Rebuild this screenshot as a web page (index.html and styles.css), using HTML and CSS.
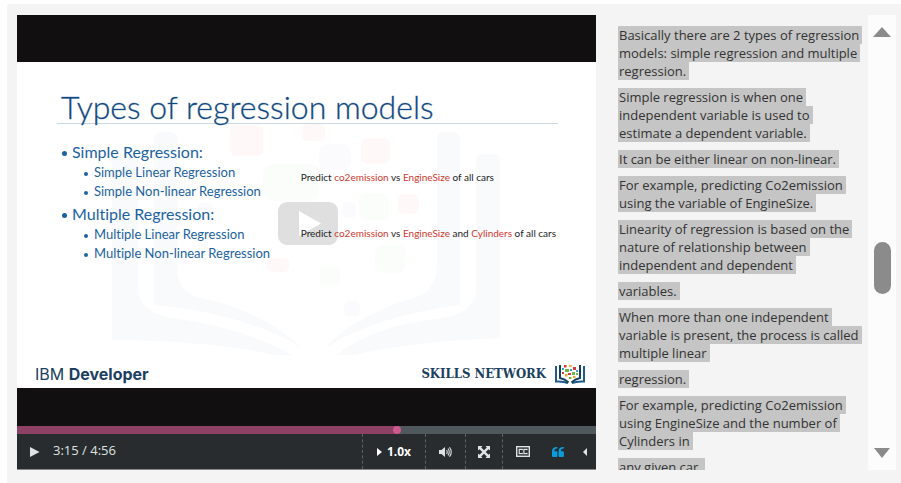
FILE: index.html
```html
<!DOCTYPE html>
<html lang="en">
<head>
<meta charset="utf-8">
<title>Types of regression models</title>
<link rel="stylesheet" href="styles.css">
</head>
<body>
<main class="lesson">
  <section class="player" aria-label="Video player">
    <div class="stage">
      <article class="slide">
        <svg class="watermark" viewBox="0 0 579 326" preserveAspectRatio="none" aria-hidden="true">
          <g fill="#f9fafc">
            <path d="M95 98Q95 92 101 92H114Q121 92 121 99V230Q125 252 160 257Q225 265 275 293H258Q195 279 98 278Q95 278 95 276Z"/>
            <path d="M137 77Q137 70 144 70H153Q160 70 160 77V205Q160 229 180 235Q245 248 285 286Q230 252 137 243Z"/>
            <path d="M483 98Q483 92 477 92H466Q459 92 459 99V230Q457 252 420 257Q355 264 320 293H336Q400 279 483 276Z"/>
            <path d="M443 77Q443 70 436 70H427Q420 70 420 77V205Q418 229 400 235Q340 252 308 286Q358 254 443 243Z"/>
          </g>
          <g fill="#fef8f8">
            <rect x="213" y="63" width="33" height="31" rx="6"/><rect x="285" y="62" width="23" height="17" rx="6"/>
            <rect x="344" y="76" width="29" height="26" rx="7"/><rect x="381" y="132" width="21" height="20" rx="5"/><rect x="250" y="196" width="22" height="14" rx="5"/>
          </g>
          <g fill="#fafdf9">
            <rect x="246" y="102" width="56" height="37" rx="9"/><rect x="342" y="131" width="30" height="27" rx="7"/>
            <rect x="303" y="205" width="20" height="18" rx="4"/><rect x="358" y="183" width="30" height="28" rx="7"/>
          </g>
          <g fill="#fbfbfd">
            <rect x="302" y="82" width="32" height="26" rx="8"/><rect x="180" y="141" width="16" height="16" rx="5"/><rect x="327" y="239" width="16" height="15" rx="5"/><rect x="325" y="140" width="14" height="16" rx="5"/>
          </g>
        </svg>
        <button class="big-play" aria-label="Play video"><svg width="60" height="43" viewBox="0 0 60 43"><path d="M21 9V34L43 21.500Z" fill="#fff"/></svg></button>
        <h1>Types of regression models</h1>
        <div class="columns">
          <ul class="topics">
            <li>Simple Regression:
              <ul><li>Simple Linear Regression</li><li>Simple Non-linear Regression</li></ul>
            </li>
            <li>Multiple Regression:
              <ul><li>Multiple Linear Regression</li><li>Multiple Non-linear Regression</li></ul>
            </li>
          </ul>
          <div class="examples">
            <p>Predict <em>co2emission</em> vs <em>EngineSize</em> of all cars</p>
            <p>Predict <em>co2emission</em> vs <em>EngineSize</em> and <em>Cylinders</em> of all cars</p>
          </div>
        </div>
        <footer class="brands">
          <span class="ibm">IBM <b>Developer</b></span>
          <span class="skills">SKILLS NETWORK
            <svg width="32" height="20" viewBox="0 0 32 20" aria-hidden="true">
              <g fill="none" stroke="#1c5c8c" stroke-width="2"><path d="M2 2V17.500Q9 17 14 19"/><path d="M30 2V17.500Q23 17 18 19"/></g>
              <g fill="none" stroke="#163f60" stroke-width="2"><path d="M6 1V14Q11 15 14.500 18.500"/><path d="M26 1V14Q21 15 17.500 18.500"/></g>
              <g fill="#d83a3a"><rect x="10" y="1" width="2.500" height="2.500"/><rect x="19" y="3" width="3" height="3"/><rect x="14" y="9" width="3" height="2"/><rect x="8" y="8" width="2" height="2"/></g>
              <g fill="#72b640"><rect x="11" y="5" width="4" height="3"/><rect x="18" y="8" width="3" height="3"/><rect x="15" y="13" width="2.500" height="2"/><rect x="22" y="9" width="2" height="2"/></g>
              <g fill="#ecaa2c"><rect x="15" y="1" width="2.500" height="2"/><rect x="11" y="10" width="2.500" height="2.500"/><rect x="19" y="12" width="2.500" height="2"/></g>
              <g fill="#36a5c9"><rect x="16" y="5" width="2" height="2"/><rect x="8" y="4" width="2" height="2"/><rect x="22" y="6" width="2" height="2"/></g>
            </svg>
          </span>
        </footer>
      </article>
    </div>
    <input class="seek" type="range" min="0" max="296" value="195" aria-label="Video position">
    <div class="controls">
      <button class="play" aria-label="Play"><svg width="10" height="10" viewBox="0 0 10 10"><path d="M0 0L9.500 5L0 10Z"/></svg></button>
      <span class="time">3:15 / 4:56</span>
      <button class="speed" aria-label="Speed 1.0x"><svg width="5" height="8" viewBox="0 0 5 8"><path d="M0 0L5 4L0 8Z"/></svg>1.0x</button>
      <button class="volume" aria-label="Volume"><svg width="13" height="12" viewBox="0 0 13 12"><path d="M0 4H2.500L6 1V11L2.500 8H0Z"/><path d="M7.500 4Q9 6 7.500 8M9 2.500Q11.500 6 9 9.500M10.500 1.200Q14 6 10.500 10.800" fill="none" stroke="currentColor" stroke-width="1.100"/></svg></button>
      <button class="full" aria-label="Fill browser"><svg width="12" height="12" viewBox="0 0 12 12"><path d="M0 0H4.500L3.200 1.500L6 4.300L8.800 1.500L7.500 0H12V4.500L10.500 3.200L7.700 6L10.500 8.800L12 7.500V12H7.500L8.800 10.500L6 7.700L3.200 10.500L4.500 12H0V7.500L1.500 8.800L4.300 6L1.500 3.200L0 4.500Z"/></svg></button>
      <button class="cc" aria-label="Closed captions"><svg width="14" height="11" viewBox="0 0 14 11"><g fill="none" stroke="currentColor"><rect x=".700" y=".700" width="12.600" height="9.600" stroke-width="1.400"/><path d="M6.300 4.300V3.300H3.200V7.700H6.300V6.700M11 4.300V3.300H7.900V7.700H11V6.700" stroke-width="1.200"/></g></svg></button>
      <button class="quote" aria-label="Transcript"><svg width="12" height="10" viewBox="0 0 12 10"><path id="q" d="M5.400 0V1.600H4.700Q2.300 1.800 2.300 4.200H4.400Q5.400 4.200 5.400 5.200V8.900Q5.400 10 4.300 10H1.100Q0 10 0 8.900V4.500Q0 0 4.500 0Z"/><use href="#q" x="6.500"/></svg></button>
      <button class="more" aria-label="Show language menu"><svg width="4" height="8" viewBox="0 0 4 8"><path d="M4 0L0 4L4 8Z"/></svg></button>
    </div>
  </section>
  <section class="transcript" aria-label="Transcript">
    <p><span>Basically there are 2 types of regression models: simple regression and multiple regression.</span></p>
    <p><span>Simple regression is when one independent variable is used to estimate a dependent variable.</span></p>
    <p><span>It can be either linear on non-linear.</span></p>
    <p><span>For example, predicting Co2emission using the variable of EngineSize.</span></p>
    <p><span>Linearity of regression is based on the nature of relationship between independent and dependent</span></p>
    <p><span>variables.</span></p>
    <p><span>When more than one independent variable is present, the process is called multiple linear</span></p>
    <p><span>regression.</span></p>
    <p><span>For example, predicting Co2emission using EngineSize and the number of Cylinders in</span></p>
    <p><span>any given car.</span></p>
  </section>
  <div class="scrollbar">
    <button aria-label="Scroll up"><svg width="18" height="10" viewBox="0 0 18 10"><path d="M9 0L18 10H0Z"/></svg></button>
    <div class="track"><div class="thumb"></div></div>
    <button aria-label="Scroll down"><svg width="16" height="10" viewBox="0 0 16 10"><path d="M0 0H16L8 10Z"/></svg></button>
  </div>
</main>
</body>
</html>
```
FILE: styles.css
```css
* { box-sizing: border-box; }
body { margin: 0; background: #fff; font-family: "Open Sans", sans-serif; font-size: 13px; }
button { border: 0; padding: 0; background: none; color: inherit; font: inherit; display: flex; align-items: center; justify-content: center; }
svg { display: block; fill: currentColor; }
h1, p, ul { margin: 0; padding: 0; }

.lesson {
  display: grid;
  grid-template-columns: minmax(0, 579fr) minmax(0, 272fr) 28px;
  margin: 4px 0 0 7px;
  padding: 11px 5px 13px 10px;
  background: #f4f4f4;
  border-top-left-radius: 4px;
}

.player { display: flex; flex-direction: column; background: #282c2e; border-bottom: 1px solid #888; }
.stage { padding: 47px 0 38px; background: #110f10; }
.slide { position: relative; display: flex; flex-direction: column; padding: 28px 10px 2px 18px; background: #fff; font-family: Lato, sans-serif; font-variant-ligatures: none; }
.watermark { position: absolute; inset: 0; width: 100%; height: 100%; }
.slide h1 { position: relative; margin: 0 28px 0 22px; padding-left: 4px; border-bottom: 1px solid #c9d9e8; color: #0f4880; font-size: 32px; font-weight: 300; line-height: 33px; white-space: nowrap; -webkit-text-stroke: 1px rgba(15, 72, 128, .3); }
.columns { position: relative; display: flex; justify-content: space-between; padding: 17px 30px 0 27px; }
.topics { list-style: none; color: #1c62a0; font-size: 16px; line-height: 22px; white-space: nowrap; }
.topics li::before { content: ""; display: inline-block; width: 5px; height: 5px; margin-right: 5px; border-radius: 50%; background: currentColor; vertical-align: middle; }
.topics ul { padding-left: 22px; list-style: none; font-size: 13px; line-height: 19px; }
.topics ul li::before { width: 4px; height: 4px; margin-right: 6px; }
.topics > li + li { padding-top: 2px; }
.examples { display: grid; align-content: start; row-gap: 40px; padding-top: 28px; color: #222; font-size: 10px; line-height: 16px; white-space: nowrap; }
.examples em { color: #d0382e; font-style: normal; }
.brands { position: relative; display: flex; align-items: center; justify-content: space-between; padding: 99px 0 0; color: #1b405e; }
.ibm { font-family: Inter, sans-serif; font-size: 16px; line-height: 24px; }
.skills { display: flex; align-items: center; gap: 8px; font-family: "DejaVu Serif Condensed", "DejaVu Serif", serif; font-size: 13px; font-weight: 700; line-height: 24px; }
.big-play { position: absolute; top: 140px; left: 45%; border-radius: 9px; background: rgba(150, 150, 150, .3); }

.seek { appearance: none; width: 100%; height: 8px; margin: 0; background: linear-gradient(to right, #8f4065 66%, #4f595d 66%); }
.seek::-webkit-slider-thumb { appearance: none; width: 8px; height: 8px; border-radius: 50%; background: #cb598d; }
.controls { display: flex; height: 35px; color: #dfe3e4; }
.play { width: 36px; }
.time { margin-right: auto; line-height: 32px; }
.speed, .volume, .full, .cc { border-left: 1px dashed #5c6266; }
.speed { width: 63px; gap: 5px; color: #fff; font-size: 12px; font-weight: 700; }
.volume { width: 40px; }
.full { width: 37px; }
.cc { width: 40px; }
.quote { width: 32px; color: #0d9bdc; }
.more { width: 22px; }

.transcript { height: 0; min-height: 100%; padding: 11px 3px 0 22px; overflow: hidden; color: #333; line-height: 18px; }
.transcript p + p { margin-top: 8px; }
.transcript span { padding: 0 3px 0 1px; background: #c5c5c5; -webkit-box-decoration-break: clone; box-decoration-break: clone; }

.scrollbar { display: flex; flex-direction: column; background: #fcfcfc; color: #8b8b8b; }
.scrollbar button { height: 34px; }
.track { display: flex; flex: 1; flex-direction: column; align-items: center; }
.track::before { content: ""; flex: 193; }
.track::after { content: ""; flex: 142; }
.thumb { flex: 52; width: 17px; border-radius: 9px; background: #8b8b8b; }
```
